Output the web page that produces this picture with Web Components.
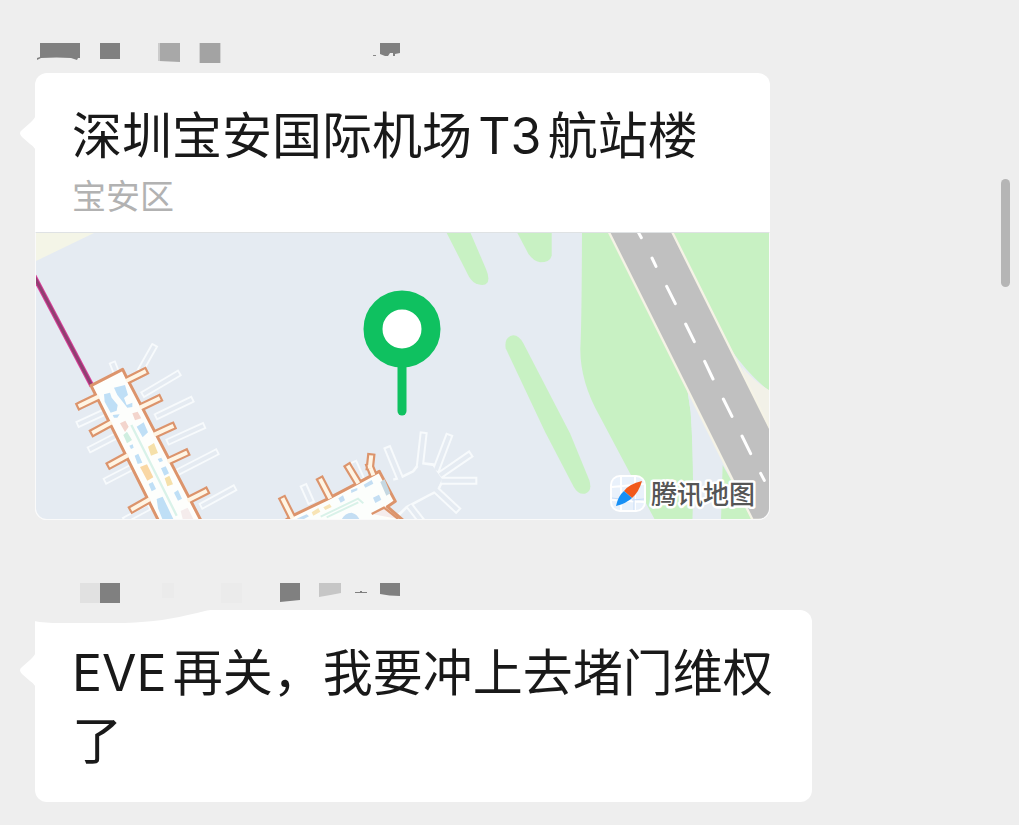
<!DOCTYPE html>
<html lang="zh-CN">
<head>
<meta charset="utf-8">
<meta name="viewport" content="width=device-width, initial-scale=1">
<title>聊天</title>
<style>
  body {
    margin: 0;
    background: #eeeeee;
    color: #191919;
    font-family: Inter, "Noto Sans CJK SC", sans-serif;
    text-autospace: normal;
  }
</style>
</head>
<body>
<chat-page>
  <chat-message>
    <masked-name slot="name" variant="first"></masked-name>
    <location-card>
      <span slot="title">深圳宝安国际机场T3航站楼</span>
      <span slot="district">宝安区</span>
      <location-map></location-map>
    </location-card>
  </chat-message>
  <chat-message wide>
    <masked-name slot="name" variant="second"></masked-name>
    <text-bubble>EVE再关，我要冲上去堵门维权了</text-bubble>
  </chat-message>
</chat-page>

<script>
class ChatPage extends HTMLElement {
  constructor() {
    super();
    this.attachShadow({ mode: 'open' });
  }

  connectedCallback() {
    this.shadowRoot.innerHTML = /*HTML*/ `
      <style>
        :host {
          display: block;
        }
        main {
          display: flex;
          flex-direction: column;
          gap: 63px;
          padding: 43px 35px 23px;
        }
        /* scroll thumb lies over the page */
        .thumb {
          position: fixed;
          top: 179px;
          right: 9px;
          width: 9px;
          height: 108px;
          border-radius: 5px;
          background: #b5b5b5;
        }
      </style>
      <main><slot></slot></main>
      <div class="thumb"></div>
    `;
  }
}

class ChatMessage extends HTMLElement {
  constructor() {
    super();
    this.attachShadow({ mode: 'open' });
  }

  connectedCallback() {
    this.shadowRoot.innerHTML = /*HTML*/ `
      <style>
        :host {
          display: block;
          max-width: 735px;
        }
        :host([wide]) {
          max-width: 777px;
        }
        .bubble {
          position: relative;
          border-radius: 12px;
          background: #fff;
        }
        .tail {
          position: absolute;
          left: -16px;
          top: 42px;
          width: 17px;
          height: 36px;
        }
      </style>
      <slot name="name"></slot>
      <div class="bubble">
        <svg class="tail" viewBox="0 0 17 36" aria-hidden="true">
          <path d="M17 0C16 3 14 5 11 8L3 15Q-1 18 3 22L11 29C14 31 16 33 17 36Z" fill="#fff"/>
        </svg>
        <slot></slot>
      </div>
    `;
  }
}

// Sender name, pixelated so that only a few blocks are left
class MaskedName extends HTMLElement {
  constructor() {
    super();
    this.attachShadow({ mode: 'open' });
  }

  connectedCallback() {
    const first = `
      <path d="M5 0H45V15H43L42 17L36 15Q22 14 6 15L2 17V15L5 14Z" fill="#808080"/>
      <path d="M65 0H85V16H65Z" fill="#808080"/>
      <path d="M124 0H145V19L124 18Z" fill="#a8a8a8"/>
      <path d="M123 0H125V18H123Z" fill="#cccccc"/>
      <path d="M165 0H185V20H165Z" fill="#a3a3a3"/>
      <path d="M164 0H165V20H164ZM185 0H186V20H185Z" fill="#d2d2d2"/>
      <path d="M345 0H365V10L360 11V13H358V10H355L353 13H350L345 11Z" fill="#808080"/>
      <path d="M338 12H341V13H338Z" fill="#888888"/>`;
    const second = `
      <path d="M45 0H65V20H45Z" fill="#e1e1e1"/>
      <path d="M65 0H85V20H65Z" fill="#808080"/>
      <path d="M127 0H139V15H127ZM186 0H207V20H186Z" fill="#ebebeb"/>
      <path d="M245 0H265V17L245 19Z" fill="#808080"/>
      <path d="M284 0H306V10Q296 12 284 14Z" fill="#c6c6c6"/>
      <path d="M320 9H325V8H327V9H332V10H320ZM329 9H332V10H329Z" fill="#808080"/>
      <path d="M345 0H365V13Q354 13 345 11Z" fill="#808080"/>
      <path d="M-1 26H182Q172 27 162 30C137 36 118 39 90 40H25Q10 40 -1 38Z" fill="#eeeeee"/>`;
    this.shadowRoot.innerHTML = /*HTML*/ `
      <style>
        :host {
          display: block;
          position: relative;
          z-index: 1;
        }
        svg {
          display: block;
          width: 366px;
          height: 30px;
          overflow: visible;
        }
        :host([variant="second"]) svg {
          height: 27px;
        }
      </style>
      <svg aria-hidden="true">${this.getAttribute('variant') === 'first' ? first : second}</svg>
    `;
  }
}

class LocationCard extends HTMLElement {
  constructor() {
    super();
    this.attachShadow({ mode: 'open' });
  }

  connectedCallback() {
    this.shadowRoot.innerHTML = /*HTML*/ `
      <style>
        :host {
          display: block;
        }
        header {
          padding: 29px 32px 8px 37px;
        }
        h2, p {
          margin: 0;
          font-weight: 400;
        }
        h2 {
          font-size: 50px;
          line-height: 68px;
        }
        p {
          color: #b2b2b2;
          font-size: 34px;
          line-height: 54px;
        }
      </style>
      <header>
        <h2><slot name="title"></slot></h2>
        <p><slot name="district"></slot></p>
      </header>
      <slot></slot>
    `;
  }
}

class LocationMap extends HTMLElement {
  constructor() {
    super();
    this.attachShadow({ mode: 'open' });
  }

  // a hollow bar for every [x1, y1, x2, y2]: wide stroke below, narrow one on top
  bars(list, width, color) {
    const d = list.map(([a, b, c, e]) => `M${a} ${b}L${c} ${e}`).join('');
    return `<path d="${d}" stroke="${color}" stroke-width="${width}" stroke-linecap="square" stroke-linejoin="round" fill="none"/>`;
  }

  connectedCallback() {
    const stands = [
      [335, 430, 370, 368], [258, 440, 250, 420], [345, 505, 441, 448], [385, 572, 480, 526],
      [420, 648, 515, 605], [450, 738, 555, 684], [520, 840, 608, 792], [215, 565, 150, 595],
      [250, 637, 184, 671], [300, 730, 232, 765], [350, 850, 290, 882]
    ];
    const gates = [
      [290, 467, 342, 441], [330, 548, 384, 522], [370, 630, 425, 605], [412, 710, 466, 685],
      [470, 828, 525, 800], [205, 515, 151, 541], [240, 595, 192, 621], [290, 693, 242, 719],
      [355, 825, 309, 851]
    ];
    const stands2 = [
      [450, 235, 415, 150], [510, 195, 520, 107], [560, 205, 595, 113], [575, 222, 655, 167],
      [580, 242, 670, 242], [560, 272, 618, 326], [508, 355, 482, 322], [180, 300, 164, 264],
      [330, 230, 314, 194]
    ];
    const gates2 = [
      [125, 350, 100, 300], [238, 290, 213, 242], [322, 245, 296, 202], [368, 220, 360, 200], [360, 200, 363, 172]
    ];

    this.shadowRoot.innerHTML = /*HTML*/ `
      <style>
        :host {
          display: block;
          border: 1px solid #fafafa;
          border-top-color: #dfe2e4;
          border-radius: 0 0 12px 12px;
          overflow: hidden;
        }
        svg {
          display: block;
          width: 100%;
          height: auto;
        }
        text {
          font: 500 26px "Noto Sans CJK SC", sans-serif;
          fill: #555;
          stroke: #fff;
          stroke-width: 5px;
          stroke-linejoin: round;
          paint-order: stroke;
        }
      </style>
      <svg viewBox="36 233 733 286" role="img" aria-label="地图">
        <path d="M36 233H769V519H36Z" fill="#e5ebf2"/>
        <path d="M36 233H94L36 261Z" fill="#f4f5e7"/>

        <!-- lawns and runway -->
        <g transform="translate(420 225) scale(.33333)">
          <g fill="#c8f1c3">
            <path d="M78 20H150L198 132Q210 160 202 173Q194 184 174 178Q158 173 147 155Z"/>
            <path d="M290 20H395V92Q390 112 360 112Q340 108 325 86Z"/>
            <path d="M257 370Q252 335 280 331Q298 332 310 355L450 625L508 766Q518 800 495 806Q475 810 461 785L375 620Z"/>
            <path d="M486 20H1050V500L800 480L812 560Q822 700 818 885H705L630 745L540 575Q480 470 481 370Q485 300 486 20Z"/>
          </g>
          <path d="M800 480L900 690L1000 885H818Q822 700 812 560Z" fill="#e5ebf2"/>
          <path d="M908 720L1000 885H903Z" fill="#c8f1c3"/>
          <path d="M930 370Q985 450 1050 500V630Z" fill="#e5ebf2"/>
          <path d="M965 425Q1005 472 1050 497V640Z" fill="#f2f1e8"/>
          <path d="M566 20H756L1056 622V885H998Z" fill="#c0c0c0" stroke="#f5f3e6" stroke-width="7"/>
          <path d="M654 20L664 38M696 99L708 124M740 184L766 236M797 297L823 350M854 409L879 462M910 522L936 574M966 633L992 686M1022 745L1033 766" stroke="#fff" stroke-width="9" stroke-linecap="round"/>
        </g>

        <!-- metro line -->
        <path d="M34 276L92 386" stroke="#d83c98" stroke-width="5"/>
        <path d="M34 276L92 386" stroke="#8f4071" stroke-width="3"/>

        <!-- west pier -->
        <g transform="translate(30 225) scale(.33333)">
          ${this.bars(stands, 22, '#f7fafc')}
          ${this.bars(stands, 11, '#e5ebf2')}
          ${this.bars(gates, 25, '#dc946c')}
          <path d="M183 482L278 433L290 458L520 900H392Z" fill="#fffefa" stroke="#dc946c" stroke-width="9" stroke-linejoin="round"/>
          ${this.bars(gates, 12, '#fff5e4')}
          <path d="M193 485L276 444L510 900H400Z" fill="#fdfefc"/>
          <g fill="#bfdff6">
            <path d="M252 488L285 480L294 510L282 519L290 540L307 533V546L292 548L262 510Z"/>
            <path d="M222 508L240 503L245 518L263 540L260 557L242 563L224 530Z"/>
            <path d="M248 570L269 568L262 578H252ZM320 605L341 592L354 622L338 637ZM314 692L325 686L337 713L323 717ZM393 730L407 724L417 745L403 752ZM356 777L368 771L378 792L365 799ZM432 803L444 795L456 821L444 827ZM380 822L398 815L430 882H397L384 850Z"/>
            <path d="M298 662L308 658L311 668L303 672ZM383 702L394 698L399 708L389 712Z"/>
          </g>
          <path d="M307 565L323 560L334 580L315 586ZM270 595L286 587L296 605L285 621Z" fill="#f3d5cd"/>
          <path d="M354 665L372 654L384 684L363 692ZM404 760L418 752L429 778L412 784Z" fill="#f5e0aa"/>
          <path d="M330 726L351 718L370 757L352 767Z" fill="#f9d7a4"/>
          <path d="M280 630L291 620L306 645L291 655Z" fill="#cfeee0"/>
          <path d="M304 600L375 742L440 872" stroke="#d9f2e9" stroke-width="7" fill="none"/>
          <path d="M452 858L473 848L490 882H458Z" fill="#f5ecec"/>
        </g>

        <!-- south pier -->
        <g transform="translate(250 400) scale(.33333)">
          <path d="M430 240L450 235L490 215L510 190L550 195L580 235L562 272L535 285L470 320L445 345" fill="none" stroke="#f7fafc" stroke-width="10" stroke-linejoin="round"/>
          ${this.bars(stands2, 24, '#f7fafc')}
          ${this.bars(stands2, 12, '#e5ebf2')}
          <path d="M430 242L450 238L492 217L512 193L548 198L576 237L560 270L535 283L468 318L445 340Z" fill="#e5ebf2"/>
          ${this.bars(gates2, 25, '#dc946c')}
          <path d="M95 368L130 346L230 298L310 256L388 214L436 304L412 320L470 370Z" fill="#fffefa" stroke="#dc946c" stroke-width="9" stroke-linejoin="round"/>
          ${this.bars(gates2, 12, '#fff5e4')}
          <path d="M118 364L385 226L428 302L404 316L365 342L440 366Z" fill="#fcfefc"/>
          <path d="M365 342L402 323L445 357" stroke="#dc946c" stroke-width="7" fill="#f5ecec"/>
          <path d="M391 246L404 238L421 280L409 287Z" fill="#c5d8e2"/>
          <path d="M341 254L365 240L370 251L346 263ZM369 293L387 284L394 299L376 309ZM265 295L279 286L285 301L272 308ZM303 270L322 264V271L304 279ZM272 366Q280 340 305 338Q326 344 331 366ZM140 356L170 343L177 349L162 357Z" fill="#c4def3"/>
          <path d="M185 337L205 324L211 335L190 347ZM220 322L239 312L245 321L226 330Z" fill="#f8e4b5"/>
          <path d="M212 350L324 296L340 310M230 352L325 307" stroke="#d9f2e9" stroke-width="6" fill="none"/>
        </g>

        <!-- pin -->
        <path d="M402 360V411" stroke="#0fc160" stroke-width="9" stroke-linecap="round"/>
        <circle cx="402" cy="329" r="29" fill="#fff" stroke="#0fc160" stroke-width="19"/>

        <!-- map provider -->
        <rect x="610" y="475" width="36" height="37" rx="10" fill="#fff"/>
        <rect x="612" y="477" width="32" height="33" rx="8" fill="#e9f1fb"/>
        <path d="M612 487L644 484M612 500L644 502M621 477V510M635 477V510" stroke="#fff" stroke-width="2"/>
        <path d="M612 498L620 499M632 500L644 499M634 492V510" stroke="#c7dcf7" stroke-width="1"/>
        <path d="M642 481Q629 484 624 491L632 498Q639 492 642 481Z" fill="#f1591b"/>
        <path d="M616 506Q618 496 624 491L632 498Q627 503 616 506Z" fill="#1890f5"/>
        <text x="651" y="504">腾讯地图</text>
      </svg>
    `;
  }
}

class TextBubble extends HTMLElement {
  constructor() {
    super();
    this.attachShadow({ mode: 'open' });
  }

  connectedCallback() {
    this.shadowRoot.innerHTML = /*HTML*/ `
      <style>
        :host {
          display: block;
          padding: 29px 32px 27px 37px;
          font-size: 50px;
          line-height: 68px;
        }
      </style>
      <slot></slot>
    `;
  }
}

customElements.define('chat-page', ChatPage);
customElements.define('chat-message', ChatMessage);
customElements.define('masked-name', MaskedName);
customElements.define('location-card', LocationCard);
customElements.define('location-map', LocationMap);
customElements.define('text-bubble', TextBubble);
</script>
</body>
</html>
